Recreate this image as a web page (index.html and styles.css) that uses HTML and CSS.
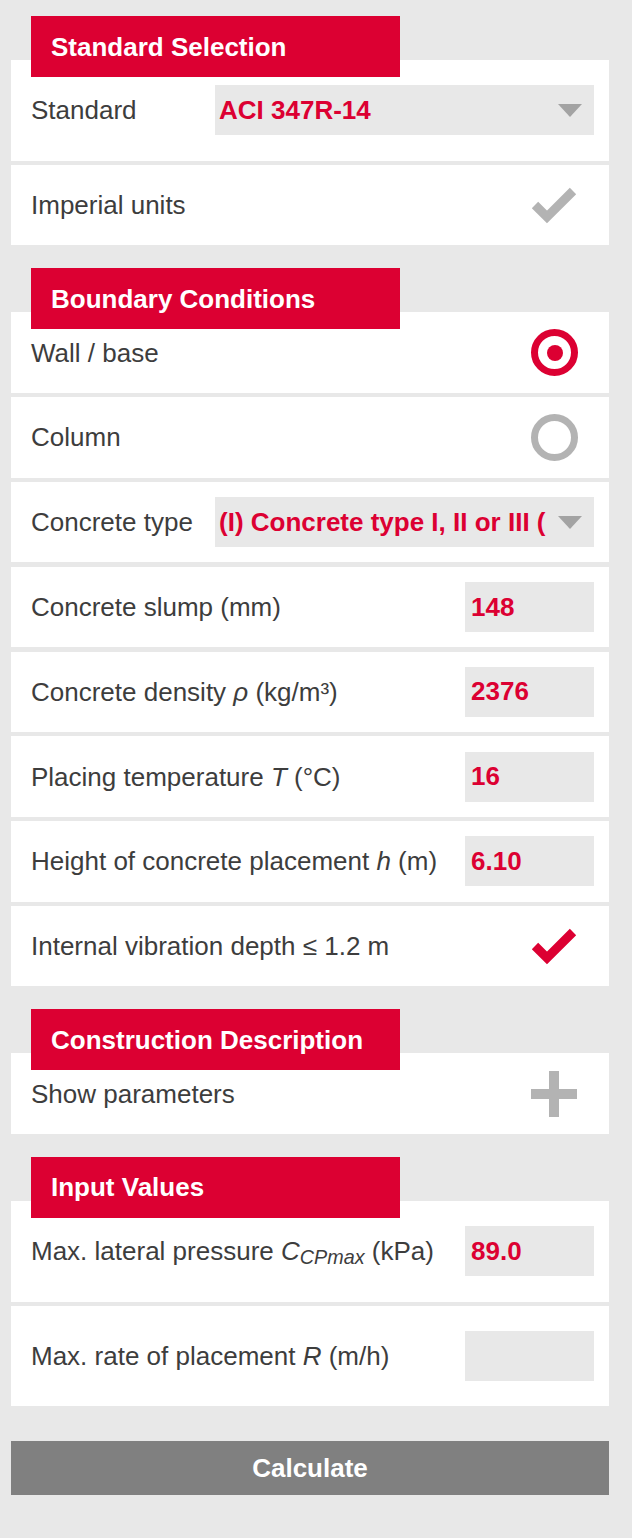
FILE: index.html
```html
<!DOCTYPE html>
<html lang="en">
<head>
<meta charset="utf-8">
<title>Formwork pressure</title>
<link rel="stylesheet" href="styles.css">
</head>
<body>
<div class="page">

  <section class="section">
    <div class="tab">Standard Selection</div>
    <div class="cards">
      <div class="card tall">
        <span class="label">Standard</span>
        <div class="select"><span class="select-value">ACI 347R-14</span><span class="arrow"></span></div>
      </div>
      <div class="card">
        <span class="label">Imperial units</span>
        <svg class="icon" viewBox="0 0 46 36" width="46" height="36"><polyline points="4,18 16,30 42,4" class="check-gray"/></svg>
      </div>
    </div>
  </section>

  <section class="section">
    <div class="tab">Boundary Conditions</div>
    <div class="cards">
      <div class="card">
        <span class="label">Wall / base</span>
        <span class="radio on"></span>
      </div>
      <div class="card">
        <span class="label">Column</span>
        <span class="radio"></span>
      </div>
      <div class="card">
        <span class="label">Concrete type</span>
        <div class="select"><span class="select-value">(I) Concrete type I, II or III (</span><span class="arrow"></span></div>
      </div>
      <div class="card">
        <span class="label">Concrete slump (mm)</span>
        <div class="input">148</div>
      </div>
      <div class="card">
        <span class="label">Concrete density <i>ρ</i> (kg/m³)</span>
        <div class="input">2376</div>
      </div>
      <div class="card">
        <span class="label">Placing temperature <i>T</i> (°C)</span>
        <div class="input">16</div>
      </div>
      <div class="card">
        <span class="label">Height of concrete placement <i>h</i> (m)</span>
        <div class="input">6.10</div>
      </div>
      <div class="card">
        <span class="label">Internal vibration depth ≤ 1.2 m</span>
        <svg class="icon" viewBox="0 0 46 36" width="46" height="36"><polyline points="4,18 16,30 42,4" class="check-red"/></svg>
      </div>
    </div>
  </section>

  <section class="section">
    <div class="tab">Construction Description</div>
    <div class="cards">
      <div class="card">
        <span class="label">Show parameters</span>
        <span class="plus"></span>
      </div>
    </div>
  </section>

  <section class="section">
    <div class="tab">Input Values</div>
    <div class="cards">
      <div class="card tall">
        <span class="label">Max. lateral pressure <i>C<sub>CPmax</sub></i> (kPa)</span>
        <div class="input">89.0</div>
      </div>
      <div class="card tall">
        <span class="label">Max. rate of placement <i>R</i> (m/h)</span>
        <div class="input"></div>
      </div>
    </div>
  </section>

  <button class="calc" type="button">Calculate</button>
</div>
</body>
</html>
```

FILE: styles.css
```css
html, body {
  margin: 0;
  padding: 0;
  background: #e8e8e8;
}

body {
  font-family: "Liberation Sans", Arial, Helvetica, sans-serif;
  font-size: 26px;
  color: #3d3d3d;
}

.page {
  width: 598px;
  padding: 16px 23px 43px 11px;
  display: flex;
  flex-direction: column;
  gap: 23px;
}

.section {
  display: flex;
  flex-direction: column;
}

.tab {
  position: relative;
  z-index: 1;
  margin-left: 20px;
  width: 349px;
  height: 61px;
  padding-left: 20px;
  margin-bottom: -17px;
  background: #dc0032;
  color: #ffffff;
  font-weight: bold;
  display: flex;
  align-items: center;
  line-height: 1;
}

.cards {
  display: flex;
  flex-direction: column;
  gap: 4.3px;
}

.card {
  background: #ffffff;
  height: 80.5px;
  box-sizing: border-box;
  padding: 0 15px 0 20px;
  display: flex;
  align-items: center;
}

.card.tall {
  height: 100.6px;
}

.label {
  flex: 1;
  min-width: 0;
  white-space: nowrap;
  line-height: 1;
}

.label sub {
  font-size: 0.76em;
  vertical-align: -0.22em;
  line-height: 0;
}

.select {
  width: 379px;
  height: 50px;
  box-sizing: border-box;
  background: #e8e8e8;
  display: flex;
  align-items: center;
  padding: 0 12px 0 4px;
  color: #dc0032;
  font-weight: bold;
}

.select-value {
  flex: 1;
  min-width: 0;
  white-space: nowrap;
  margin-right: 12px;
}

.arrow {
  width: 0;
  height: 0;
  border-left: 12px solid transparent;
  border-right: 12px solid transparent;
  border-top: 13px solid #a3a3a3;
}

.input {
  width: 129px;
  height: 50px;
  box-sizing: border-box;
  background: #e8e8e8;
  padding-left: 6px;
  display: flex;
  align-items: center;
  color: #dc0032;
  font-weight: bold;
}

.icon {
  display: block;
  margin-right: 17px;
  overflow: visible;
}

.check-gray, .check-red {
  fill: none;
  stroke-width: 9;
  stroke-linecap: butt;
  stroke-linejoin: miter;
}

.check-gray { stroke: #b3b3b3; }
.check-red { stroke: #dc0032; }

.radio {
  width: 47px;
  height: 47px;
  box-sizing: border-box;
  border-radius: 50%;
  border: 7px solid #b3b3b3;
  margin-right: 16px;
  display: flex;
  align-items: center;
  justify-content: center;
}

.radio.on {
  border-color: #dc0032;
}

.radio.on::after {
  content: "";
  width: 16px;
  height: 16px;
  border-radius: 50%;
  background: #dc0032;
}

.plus {
  position: relative;
  width: 46px;
  height: 46px;
  margin-right: 17px;
}

.plus::before, .plus::after {
  content: "";
  position: absolute;
  background: #b3b3b3;
}

.plus::before {
  left: 18px;
  top: 0;
  width: 10px;
  height: 46px;
}

.plus::after {
  top: 18px;
  left: 0;
  width: 46px;
  height: 10px;
}

.calc {
  margin-top: 12px;
  width: 598px;
  height: 54px;
  border: 0;
  padding: 0;
  background: #808080;
  color: #ffffff;
  font-family: "Liberation Sans", Arial, Helvetica, sans-serif;
  font-size: 26px;
  font-weight: bold;
}
```
